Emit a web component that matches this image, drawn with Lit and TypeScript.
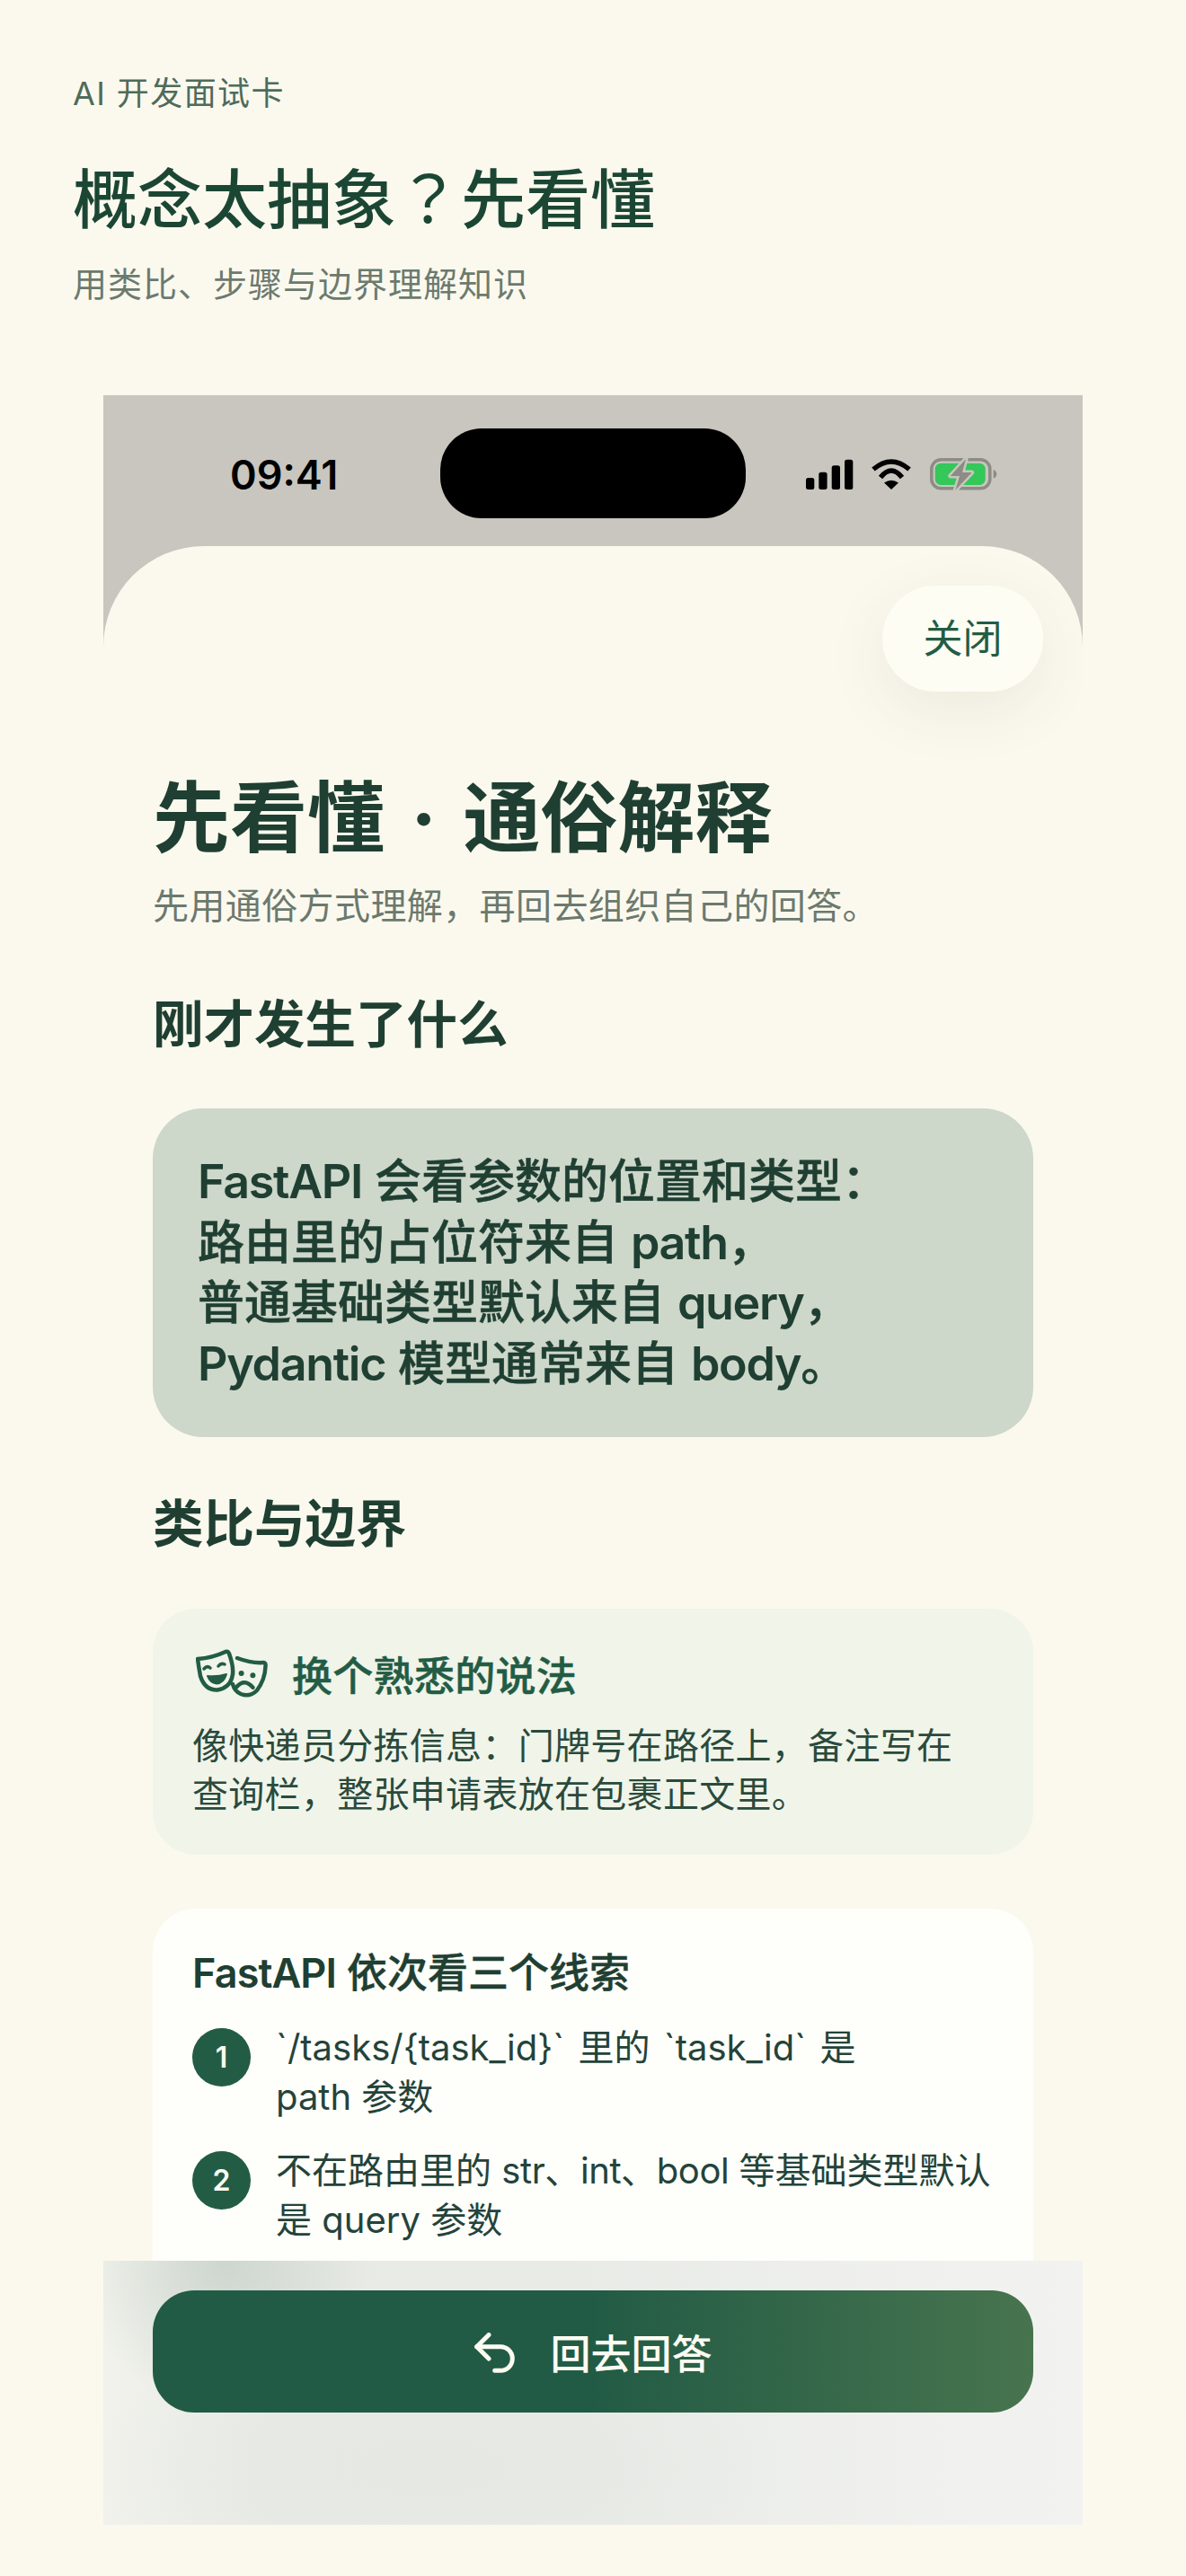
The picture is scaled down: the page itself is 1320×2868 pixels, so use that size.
import { LitElement, html, css } from "lit";
import { customElement } from "lit/decorators.js";

@customElement("app-root")
export class AppRoot extends LitElement {
  static styles = css`
    :host {
      display: block;
      width: 1320px;
      height: 2868px;
      overflow: hidden;
      background: #fbf9ee;
      font-family: Inter, "Noto Sans CJK SC", sans-serif;
      color: #1f3f32;
    }
    .head { padding: 80px 81px 0; height: 440px; box-sizing: border-box; }
    .eyebrow { font-size: 36px; line-height: 48px; color: #4f6b5a; letter-spacing: 1.4px; }
    .title { margin: 43px 0 0; font-size: 72px; line-height: 92px; font-weight: 500; color: #1c4634; }
    .q { font-family: "Noto Sans CJK TC", sans-serif; font-weight: 400; }
    .subtitle { margin-top: 23px; font-size: 38px; line-height: 50px; color: #6c7a6e; letter-spacing: 1px; }

    .phone {
      position: relative;
      width: 1090px;
      height: 2371px;
      margin-left: 115px;
      background: #c9c6bf;
      overflow: hidden;
    }
    .status { height: 168px; position: relative; }
    .time { position: absolute; left: 141px; top: 63px; font-size: 45px; line-height: 52px; font-weight: 600; color: #000; }
    .island { position: absolute; left: 375px; top: 37px; width: 340px; height: 100px; border-radius: 46px; background: #000; }
    .icons { position: absolute; left: 782px; top: 70px; display: flex; }

    .sheet {
      position: relative;
      height: 2203px;
      background: #fbf9ee;
      border-radius: 112px 112px 0 0;
      padding: 0 55px;
      box-sizing: border-box;
      overflow: hidden;
    }
    .close {
      position: absolute;
      right: 44px;
      top: 44px;
      width: 179px;
      height: 118px;
      border-radius: 59px;
      background: #fefdf3;
      color: #235c45;
      font-size: 44px;
      line-height: 118px;
      text-align: center;
      box-shadow: 0 20px 70px rgba(60, 60, 40, 0.08);
    }
    h1 { margin: 0; padding-top: 247px; font-size: 86px; line-height: 112px; font-weight: 700; color: #1f3f32; word-spacing: 9px; }
    .lead { margin-top: 16px; font-size: 40px; line-height: 52px; color: #6b796e; letter-spacing: 0.4px; }
    h2 { margin: 0; font-size: 56.5px; line-height: 72px; font-weight: 700; color: #1f3f32; }
    .h-a { margin-top: 70px; }
    .h-b { margin-top: 61px; }
    .hero {
      margin-top: 57px;
      height: 366px;
      box-sizing: border-box;
      padding: 48px 50px;
      border-radius: 56px;
      background: #cdd7ca;
      font-size: 52px;
      line-height: 67.5px;
      font-weight: 500;
      color: #1f3f32;
      -webkit-text-stroke: 0.5px #1f3f32;
    }
    .l { letter-spacing: -0.02em; font-weight: 600; }
    .hero .l { letter-spacing: -0.025em; -webkit-text-stroke: 0; }
    .analogy {
      margin-top: 58px;
      height: 274px;
      box-sizing: border-box;
      padding: 42px 44px;
      border-radius: 48px;
      background: #f0f4e9;
    }
    .a-head {
      display: flex;
      align-items: center;
      gap: 27px;
      height: 60px;
      padding-left: 4px;
      font-size: 45px;
      font-weight: 500;
      color: #235c45;
      letter-spacing: 0.3px;
      -webkit-text-stroke: 0.5px #235c45;
    }
    .a-body { margin-top: 24px; font-size: 40px; line-height: 54px; color: #2a4a3c; letter-spacing: 0.3px; }
    .steps {
      margin-top: 60px;
      height: 800px;
      box-sizing: border-box;
      padding: 42px 44px;
      border-radius: 48px;
      background: #fefffb;
    }
    .s-title { font-size: 45px; line-height: 60px; font-weight: 500; color: #1f3f32; -webkit-text-stroke: 0.4px #1f3f32; }
    .s-title .l { -webkit-text-stroke: 0; }
    .step { display: flex; gap: 28px; margin-top: 25px; }
    .step + .step { margin-top: 27px; }
    .num {
      flex: none;
      width: 65px;
      height: 65px;
      margin-top: 6px;
      border-radius: 50%;
      background: #235c45;
      color: #fdfcf2;
      font-size: 32px;
      font-weight: 600;
      display: flex;
      align-items: center;
      justify-content: center;
    }
    .s-text { font-size: 40px; line-height: 55px; color: #24433a; white-space: nowrap; }
    .w { word-spacing: 4px; }
    .t { letter-spacing: -0.01em; }

    .bar {
      position: absolute;
      left: 0;
      right: 0;
      bottom: 0;
      height: 294px;
      padding: 33px 55px 0;
      box-sizing: border-box;
      background:
        radial-gradient(ellipse 160px 170px at 12.5% 0%, rgba(205, 214, 206, 1), rgba(205, 214, 206, 0) 100%),
        radial-gradient(ellipse 400px 140px at 33% 78%, rgba(228, 230, 226, 0.7), rgba(228, 230, 226, 0) 100%),
        linear-gradient(90deg, #f1f2ec 0%, #e8eae5 18%, #e9ebe7 50%, #f0f1ee 85%, #f2f3f0 100%);
    }
    .cta {
      height: 136px;
      border-radius: 46px;
      background: linear-gradient(90deg, #225b45 0%, #225b45 50%, #47744e 100%);
      color: #fdfcf2;
      display: flex;
      align-items: center;
      justify-content: center;
      gap: 37px;
      font-size: 45px;
      font-weight: 500;
    }
    .cta svg { margin-top: 6px; }
    .tail { height: 57px; background: #fbf9ee; }
  `;

  render() {
    return html`
      <div class="head">
        <div class="eyebrow">AI 开发面试卡</div>
        <div class="title">概念太抽象<span class="q">？</span>先看懂</div>
        <div class="subtitle">用类比、步骤与边界理解知识</div>
      </div>
      <div class="phone">
        <div class="status">
          <div class="time">09:41</div>
          <div class="island"></div>
          <div class="icons">
            <svg width="216" height="40" viewBox="0 0 216 40">
              <g fill="#000">
                <rect x="0" y="22" width="9.3" height="13" rx="2.5"/>
                <rect x="14.300" y="15.700" width="9.3" height="19.300" rx="2.5"/>
                <rect x="28.700" y="8.300" width="9.3" height="26.700" rx="2.5"/>
                <rect x="43" y="1.700" width="9.3" height="33.300" rx="2.5"/>
              </g>
              <g fill="none" stroke="#000" stroke-width="5.5">
                <path d="M75 12.500 Q95 -4.500 115 12.500"/>
                <path d="M83 21.500 Q95 6.500 107 21.500"/>
              </g>
              <path d="M95 35 L87 27.500 Q95 22 103 27.500 Z" fill="#000"/>
              <rect x="139.800" y="1.800" width="65" height="32" rx="10.500" fill="none" stroke="#8c8b85" stroke-width="3.5"/>
              <rect x="143.700" y="5.700" width="56" height="24.300" rx="6.500" fill="#34c759"/>
              <path d="M208.700 12.700 Q212.300 14.500 212.300 17.700 Q212.300 21 208.700 22.700 Z" fill="#8c8b85"/>
              <path d="M178 1 L160.700 20 L171 20 L166.300 35.700 L184.700 16 L174 16 Z" fill="#8c8b85" stroke="#c9c6bf" stroke-width="5" stroke-linejoin="round" paint-order="stroke"/>
            </svg>
          </div>
        </div>
        <div class="sheet">
          <div class="close">关闭</div>
          <h1>先看懂 · 通俗解释</h1>
          <div class="lead">先用通俗方式理解，再回去组织自己的回答。</div>
          <h2 class="h-a">刚才发生了什么</h2>
          <div class="hero">
            <span class="l">FastAPI</span> 会看参数的位置和类型：<br />
            路由里的占位符来自 <span class="l">path</span>，<br />
            普通基础类型默认来自 <span class="l">query</span>，<br />
            <span class="l">Pydantic</span> 模型通常来自 <span class="l">body</span>。
          </div>
          <h2 class="h-b">类比与边界</h2>
          <div class="analogy">
            <div class="a-head">
              <svg width="80" height="56" viewBox="0 0 80 56" fill="none" stroke="#235c45" stroke-width="4.5" stroke-linecap="round" stroke-linejoin="round">
                <path d="M2 12 Q18 11 33 4 Q36 3 37 6 Q42 20 41 29 Q39 44 24 46.500 Q10 47 5 31 Q3 20 2 12 Z"/>
                <path d="M46 11 Q62 17 75 16 Q78 16 77.500 20 Q77 35 68 47 Q60 55 50 51 Q43 48 41 40"/>
                <path d="M9 23 Q12.500 19 16 22M25 20 Q28 16 32 18" stroke-width="3.5"/>
                <path d="M13 31 Q24 32 34 29 Q31 39 23 39.500 Q16 39 13 31 Z" fill="#235c45" stroke-width="2"/>
                <path d="M50.600 28 h.01M63.400 30.300 h.01" stroke-width="6"/>
                <path d="M45.500 43 Q54 33 63.500 43.700"/>
              </svg>
              换个熟悉的说法
            </div>
            <div class="a-body">像快递员分拣信息：门牌号在路径上，备注写在<br />查询栏，整张申请表放在包裹正文里。</div>
          </div>
          <div class="steps">
            <div class="s-title"><span class="l">FastAPI</span> 依次看三个线索</div>
            <div class="step">
              <div class="num">1</div>
              <div class="s-text"><span class="w">\`/tasks/{task_id}\` 里的 \`task_id\` 是</span><br />path 参数</div>
            </div>
            <div class="step">
              <div class="num">2</div>
              <div class="s-text">不在路由里的 <span class="t">str、int、bool</span> 等基础类型默认<br />是 query 参数</div>
            </div>
          </div>
          <div class="bar">
            <div class="cta">
              <svg width="48" height="48" viewBox="0 0 48 48" fill="none" stroke="#fdfcf2" stroke-width="5" stroke-linecap="round" stroke-linejoin="round">
                <path d="M17 2.500 L3.700 15.700 L17 29"/>
                <path d="M3.700 15.700 H30 A13.300 13.300 0 0 1 30 42.300 H23.700"/>
              </svg>
              回去回答
            </div>
          </div>
        </div>
      </div>
      <div class="tail"></div>
    `;
  }
}
